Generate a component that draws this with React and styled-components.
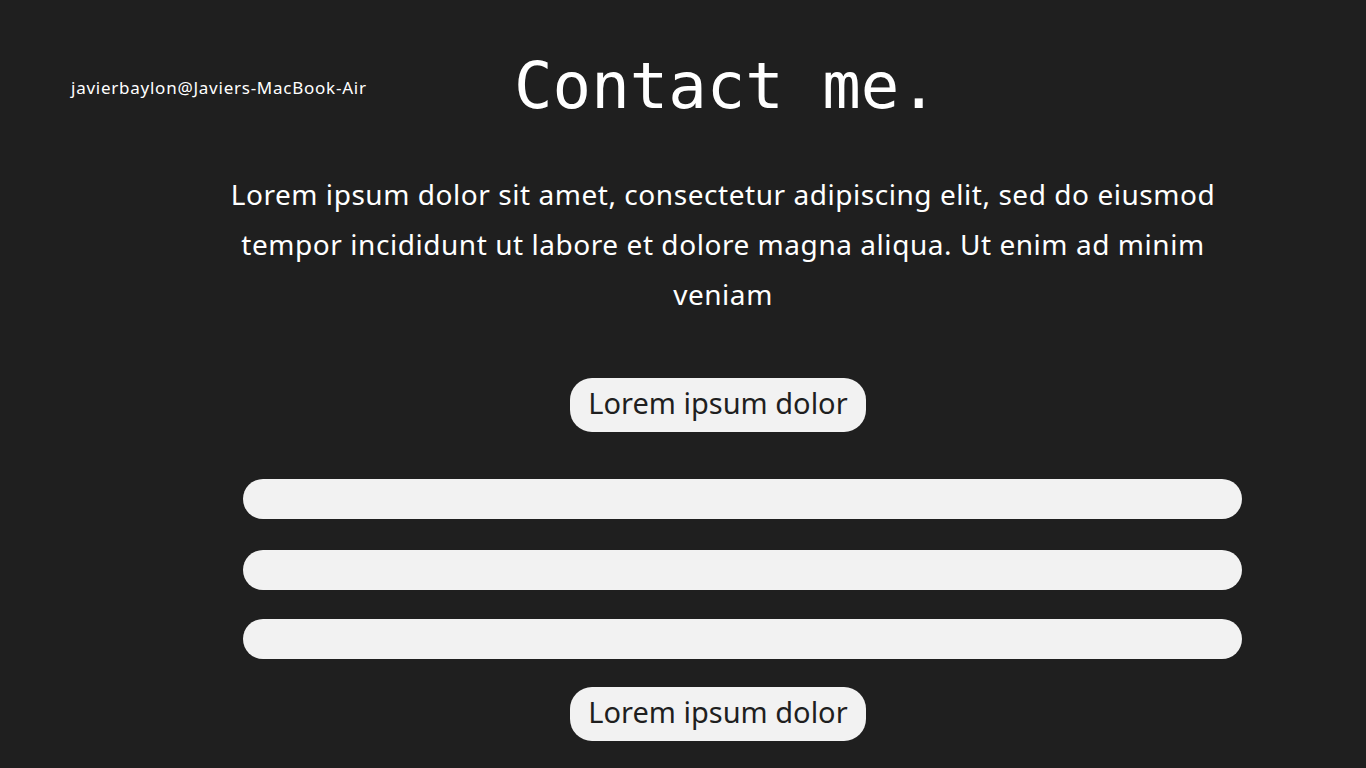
import styled, { createGlobalStyle } from "styled-components";

const colors = {
  dark: "#1f1f1f",
  light: "#f2f2f2",
  white: "#ffffff",
  ink: "#1f1f1f",
};

const GlobalStyle = createGlobalStyle`
  html, body {
    margin: 0;
    padding: 0;
    background-color: ${colors.dark};
  }
  * {
    box-sizing: border-box;
  }
`;

function App() {
  return (
    <Container>
      <GlobalStyle />
      <Header>
        <UserTag>javierbaylon@Javiers-MacBook-Air</UserTag>
        <Title>Contact me.</Title>
      </Header>
      <Intro>
        Lorem ipsum dolor sit amet, consectetur adipiscing elit, sed do eiusmod
        tempor incididunt ut labore et dolore magna aliqua. Ut enim ad minim
        veniam
      </Intro>
      <PillButton type="button">Lorem ipsum dolor</PillButton>
      <Form onSubmit={(e) => e.preventDefault()}>
        <Field aria-label="name" />
        <Field aria-label="email" $gap={31} />
        <Field aria-label="message" $gap={29} />
      </Form>
      <PillButton type="submit" $top={28}>
        Lorem ipsum dolor
      </PillButton>
    </Container>
  );
}

const Container = styled.div`
  display: flex;
  flex-direction: column;
  align-items: center;
  min-height: 768px;
  padding: 48px 0 0 80px;
  background-color: ${colors.dark};
  font-family: "Noto Sans", "Open Sans", sans-serif;
`;

const Header = styled.header`
  display: grid;
  width: 100%;
  align-items: center;
`;

const UserTag = styled.span`
  grid-area: 1 / 1;
  justify-self: start;
  margin-left: -9px;
  margin-top: 2px;
  color: ${colors.white};
  font-size: 17px;
  letter-spacing: 0.75px;
`;

const Title = styled.h1`
  grid-area: 1 / 1;
  justify-self: center;
  margin: 0 0 0 6px;
  color: ${colors.white};
  font-family: "DejaVu Sans Mono", "Liberation Mono", monospace;
  font-weight: 400;
  font-size: 64px;
  line-height: 76px;
`;

const Intro = styled.p`
  width: 1000px;
  margin: 45px 0 0;
  color: ${colors.white};
  font-size: 28px;
  letter-spacing: 0.55px;
  line-height: 50px;
  text-align: center;
`;

const PillButton = styled.button`
  margin-top: ${(p) => p.$top ?? 59}px;
  margin-left: -10px;
  height: 54px;
  padding: 0 18px 5px;
  border: none;
  border-radius: 22px;
  background-color: ${colors.light};
  color: ${colors.ink};
  font-family: inherit;
  font-size: 29px;
  cursor: pointer;
`;

const Form = styled.form`
  display: flex;
  flex-direction: column;
  align-items: center;
  margin-top: 47px;
  margin-left: 39px;
`;

const Field = styled.input`
  width: 999px;
  height: 40px;
  margin-top: ${(p) => p.$gap ?? 0}px;
  border: none;
  border-radius: 20px;
  background-color: ${colors.light};
  outline: none;
`;

export default App;
